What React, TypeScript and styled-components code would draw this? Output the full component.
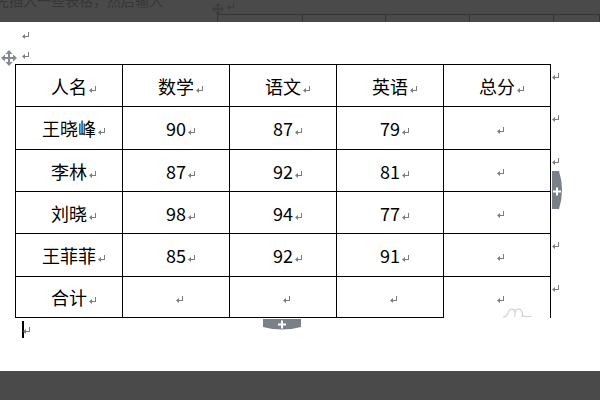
import React from "react";
import styled, { createGlobalStyle } from "styled-components";

const Global = createGlobalStyle`
  html, body { margin: 0; padding: 0; background: #fff; }
  #root { width: 600px; height: 400px; overflow: hidden; }
`;

const Screen = styled.div`
  width: 600px;
  height: 400px;
  display: flex;
  flex-direction: column;
  font-family: "Noto Sans CJK SC", "Noto Sans", sans-serif;
`;

const TopBar = styled.div`
  height: 22px;
  flex: none;
  background: #4a4a4a;
  display: flex;
  overflow: hidden;
`;

const GhostText = styled.div`
  width: 217px;
  flex: none;
  margin-left: -5px;
  margin-top: -7px;
  font-size: 14px;
  line-height: 14px;
  color: #363636;
  white-space: nowrap;
`;

const GhostArea = styled.div`
  flex: 1;
  display: flex;
  flex-direction: column;
`;

const GhostHead = styled.div`
  height: 14px;
  display: flex;
  align-items: flex-start;
  padding-top: 3px;
  box-sizing: border-box;
  gap: 3px;
  color: #3a3a3a;
`;

const GhostTable = styled.div`
  margin-left: 5px;
  flex: 1;
  display: grid;
  grid-template-columns: 85px 83px 84px 84px 1fr;
  border-top: 1px solid #363636;
  border-left: 1px solid #363636;
`;

const GhostCell = styled.div`
  border-right: 1px solid #363636;
`;

const Page = styled.div`
  flex: 1;
  background: #fff;
  display: flex;
  flex-direction: column;
`;

const MarkLine = styled.div<{ $pt: number }>`
  position: relative;
  height: 21px;
  box-sizing: border-box;
  padding-left: 22px;
  padding-top: ${(p) => p.$pt}px;
  display: flex;
  align-items: flex-start;
`;

const MoveHandle = styled.div`
  position: absolute;
  left: 1px;
  top: 7px;
  width: 16px;
  height: 17px;
  z-index: 2;
`;

const TableRow = styled.div`
  position: relative;
  margin-left: 15px;
  display: flex;
  align-items: flex-start;
`;

const Grid = styled.div`
  display: grid;
  grid-template-columns: repeat(5, 107px);
  grid-template-rows: 42px 43px 42px 42px 43px 41px;
  border-left: 1px solid #000;
  border-top: 1px solid #000;
`;

const Cell = styled.div<{ $open?: boolean }>`
  position: relative;
  box-sizing: border-box;
  border-right: 1px solid #000;
  border-bottom: ${(p) => (p.$open ? "none" : "1px solid #000")};
  display: flex;
  align-items: center;
  justify-content: center;
  font-size: 18px;
  color: #000;
  line-height: 1;
`;

const CellText = styled.span`
  display: inline-flex;
  align-items: flex-end;
  white-space: nowrap;
`;

const EndMarks = styled.div`
  display: grid;
  grid-template-rows: 42px 43px 42px 42px 43px 42px;
  padding-top: 1px;
`;

const EndMarkSlot = styled.div`
  padding-top: 8px;
  padding-left: 1px;
  box-sizing: border-box;
`;

const MarkIcon = styled.svg<{ $hang?: boolean; $dy?: number }>`
  display: block;
  flex: none;
  width: 8px;
  height: 7px;
  margin-left: ${(p) => (p.$hang ? "2px" : "0")};
  margin-right: ${(p) => (p.$hang ? "-10px" : "0")};
  margin-bottom: ${(p) => p.$dy ?? 0}px;
`;

const EmptyMark = styled.span`
  display: inline-flex;
  margin-right: -8px;
  margin-top: 4px;
`;

const RightTab = styled.svg`
  position: absolute;
  left: 537px;
  top: 107px;
  width: 12px;
  height: 38px;
`;

const BottomTab = styled.svg`
  position: absolute;
  left: 248px;
  top: 255px;
  width: 38px;
  height: 12px;
`;

const Scribble = styled.svg`
  position: absolute;
  left: 58px;
  top: 30px;
  width: 31px;
  height: 11px;
`;

const CursorLine = styled.div`
  padding-left: 22px;
  padding-top: 2px;
  display: flex;
  align-items: flex-start;
`;

const Caret = styled.div`
  width: 2px;
  height: 17px;
  background: #000;
`;

const CaretMark = styled.div`
  margin-left: -1px;
  margin-top: 6px;
`;

const BottomBar = styled.div`
  height: 29px;
  flex: none;
  background: #4a4a4a;
`;

const Mark: React.FC<{ hang?: boolean; dy?: number; color?: string }> = ({ hang, dy, color = "#7d7d7d" }) => (
  <MarkIcon $hang={hang} $dy={dy} viewBox="0 0 8 7">
    <rect x="6" y="0" width="1" height="5" fill={color} />
    <rect x="2" y="4" width="5" height="1" fill={color} />
    <path d="M0 4.5 L3 2 L3 7 Z" fill={color} />
  </MarkIcon>
);

const MoveIcon: React.FC<{ color: string; size?: number }> = ({ color, size = 16 }) => (
  <svg width={size} height={size} viewBox="0 0 16 16" style={{ display: "block" }}>
    <rect x="3" y="7" width="10" height="2" fill={color} />
    <rect x="7" y="3" width="2" height="10" fill={color} />
    <path d="M8 0 L4.5 4 L11.5 4 Z" fill={color} />
    <path d="M8 16 L4.5 12 L11.5 12 Z" fill={color} />
    <path d="M0 8 L4 4.5 L4 11.5 Z" fill={color} />
    <path d="M16 8 L12 4.5 L12 11.5 Z" fill={color} />
  </svg>
);

const rows: string[][] = [
  ["人名", "数学", "语文", "英语", "总分"],
  ["王晓峰", "90", "87", "79", ""],
  ["李林", "87", "92", "81", ""],
  ["刘晓", "98", "94", "77", ""],
  ["王菲菲", "85", "92", "91", ""],
  ["合计", "", "", "", ""],
];

export default function App() {
  return (
    <>
      <Global />
      <Screen>
        <TopBar>
          <GhostText>先插入一些表格，然后输入</GhostText>
          <GhostArea>
            <GhostHead>
              <MoveIcon color="#3c3c3c" size={12} />
              <Mark color="#3c3c3c" />
            </GhostHead>
            <GhostTable>
              <GhostCell />
              <GhostCell />
              <GhostCell />
              <GhostCell />
              <GhostCell />
            </GhostTable>
          </GhostArea>
        </TopBar>
        <Page>
          <MarkLine $pt={10}>
            <Mark />
          </MarkLine>
          <MarkLine $pt={9}>
            <MoveHandle>
              <MoveIcon color="#848a92" />
            </MoveHandle>
            <Mark />
          </MarkLine>
          <TableRow>
            <Grid>
              {rows.map((r, ri) =>
                r.map((t, ci) => {
                  const last = ri === rows.length - 1 && ci === 4;
                  return (
                    <Cell key={`${ri}-${ci}`} $open={last}>
                      {t ? (
                        <CellText>
                          {t}
                          <Mark hang dy={2} />
                        </CellText>
                      ) : (
                        <EmptyMark>
                          <Mark />
                        </EmptyMark>
                      )}
                      {last && (
                        <Scribble viewBox="0 0 31 11">
                          <path
                            d="M1 10 C4 10 5 9 6 6 C7 1 12 1 13 5 C13.5 8 12.5 10 12 10 M13 5 C14 1 19 1 20 5 C21 8 20 10 19.5 10 M20 8 C22 10 27 10 30 9"
                            fill="none"
                            stroke="#d2d2d2"
                            strokeWidth="1.2"
                          />
                        </Scribble>
                      )}
                    </Cell>
                  );
                })
              )}
            </Grid>
            <EndMarks>
              {rows.map((_, i) => (
                <EndMarkSlot key={i}>
                  <Mark />
                </EndMarkSlot>
              ))}
            </EndMarks>
            <RightTab viewBox="0 0 12 38">
              <path d="M0 0 H7 Q13 19 7 38 H0 Z" fill="#79808a" />
              <rect x="1" y="19.5" width="8" height="2" fill="#fff" />
              <rect x="4" y="16.5" width="2" height="8" fill="#fff" />
            </RightTab>
            <BottomTab viewBox="0 0 38 12">
              <path d="M0 0 H38 V8 Q19 13 0 8 Z" fill="#79808a" />
              <rect x="15" y="4.5" width="8" height="2" fill="#fff" />
              <rect x="18" y="1.5" width="2" height="8" fill="#fff" />
            </BottomTab>
          </TableRow>
          <CursorLine>
            <Caret />
            <CaretMark>
              <Mark />
            </CaretMark>
          </CursorLine>
        </Page>
        <BottomBar />
      </Screen>
    </>
  );
}
